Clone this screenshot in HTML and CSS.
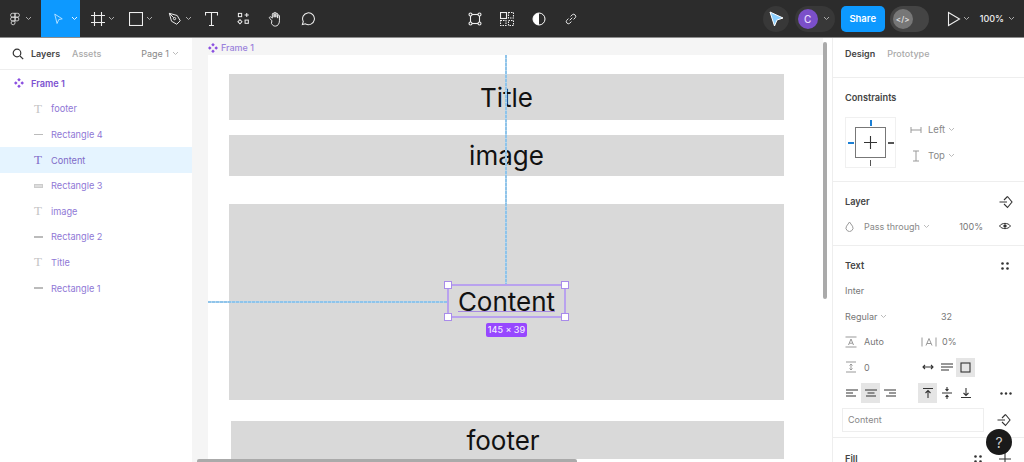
FILE: index.html
```html
<!DOCTYPE html>
<html lang="en">
<head>
<meta charset="utf-8">
<title>Figma</title>
<link rel="stylesheet" href="styles.css">
</head>
<body>
<header class="topbar">
  <div class="tools">
    <div class="tool tool-logo">
      <svg class="ic" width="10" height="14" viewBox="0 0 14 18"><path d="M7 1H3.500a2.700 2.700 0 0 0 0 5.400H7zM7 1h3.500a2.700 2.700 0 0 1 0 5.400H7zM7 6.400H3.500a2.700 2.700 0 0 0 0 5.400H7zM12.400 9.100a2.700 2.700 0 1 1-5.400 0 2.700 2.700 0 0 1 5.400 0zM7 11.800H3.500a2.700 2.700 0 1 0 3.500 2.600z"/></svg>
      <svg class="chev" width="7" height="5" viewBox="0 0 7 5"><path d="M1 1l2.500 2.500L6 1"/></svg>
    </div>
    <div class="tool tool-move">
      <svg class="ic ic-blue" width="11" height="12" viewBox="0 0 14 16"><path d="M2 1.500l10 6.300-4.600.9-2.300 5.300z"/></svg>
      <svg class="chev chev-white" width="7" height="5" viewBox="0 0 7 5"><path d="M1 1l2.500 2.500L6 1"/></svg>
    </div>
    <div class="tool tool-shape">
      <svg class="ic" width="14" height="14" viewBox="0 0 14 14"><path d="M3.500 0v14M10.500 0v14M0 3.500h14M0 10.500h14"/></svg>
      <svg class="chev" width="7" height="5" viewBox="0 0 7 5"><path d="M1 1l2.500 2.500L6 1"/></svg>
    </div>
    <div class="tool tool-shape">
      <svg class="ic" width="14" height="14" viewBox="0 0 14 14"><rect x="0.500" y="0.500" width="13" height="13"/></svg>
      <svg class="chev" width="7" height="5" viewBox="0 0 7 5"><path d="M1 1l2.500 2.500L6 1"/></svg>
    </div>
    <div class="tool tool-shape">
      <svg class="ic" width="14" height="14" viewBox="0 0 16 16"><path d="M1.500 1.500l9 2.500 3.500 6-4 4-6-3.500zM1.500 1.500l5 5"/><circle cx="7.500" cy="7.500" r="1.300"/></svg>
      <svg class="chev" width="7" height="5" viewBox="0 0 7 5"><path d="M1 1l2.500 2.500L6 1"/></svg>
    </div>
    <div class="tool tool-single">
      <svg class="ic" width="13" height="14" viewBox="0 0 13 14"><path d="M.5 3.500V.5h12v3M6.500.5v13M4 13.500h5"/></svg>
    </div>
    <div class="tool tool-single">
      <svg class="ic" width="13" height="13" viewBox="0 0 14 14"><rect x="1.500" y="1.500" width="3.500" height="3.500"/><path d="M10.500 1v4.500M8.200 3.200h4.500"/><path d="M3.200 8.300l2.100 2.200-2.100 2.200L1 10.500z"/><rect x="8.700" y="8.700" width="3.500" height="3.500"/></svg>
    </div>
    <div class="tool tool-single">
      <svg class="ic" width="16" height="16" viewBox="0 0 18 18"><path d="M5.500 11L3 8.200c-1-1.200.6-2.400 1.700-1.300L6 8V3.500c0-1.400 2-1.400 2 0V7 2.500c0-1.400 2-1.400 2 0V7 3.500c0-1.400 2-1.400 2 0V8 5.500c0-1.300 2-1.300 2 0V11c0 3.500-2 6-4.500 6-2 0-3.200-.8-4.500-3z"/></svg>
    </div>
    <div class="tool tool-single">
      <svg class="ic" width="15" height="15" viewBox="0 0 16 16"><path d="M2.500 14.500l1-3.300a6.300 6.300 0 1 1 2.400 2.500z"/></svg>
    </div>
  </div>
  <div class="actions">
    <div class="tool tool-single">
      <svg class="ic" width="14" height="14" viewBox="0 0 14 14"><rect x="2.500" y="2.500" width="9" height="9"/><circle cx="2.500" cy="2.500" r="1.500" class="knob"/><circle cx="11.500" cy="2.500" r="1.500" class="knob"/><circle cx="2.500" cy="11.500" r="1.500" class="knob"/><circle cx="11.500" cy="11.500" r="1.500" class="knob"/></svg>
    </div>
    <div class="tool tool-single">
      <svg class="ic" width="14" height="14" viewBox="0 0 14 14"><rect x="0.500" y="0.500" width="6" height="6"/><path class="dash" d="M8.500.5h5v5.500h-5zM.5 8.500h5.500v5H.5zM8.500 8.500h5v5h-5z"/></svg>
    </div>
    <div class="tool tool-single">
      <svg width="14" height="14" viewBox="0 0 14 14"><circle cx="7" cy="7" r="6" class="half-ring"/><path class="half-fill" d="M7 1a6 6 0 0 0 0 12z"/></svg>
    </div>
    <div class="tool tool-single">
      <svg class="ic" width="12" height="12" viewBox="0 0 14 14"><path d="M5.500 8.500l3-3M6.500 4L8.500 2a2.500 2.500 0 0 1 3.500 3.500L10 7.500M7.500 10L5.500 12A2.500 2.500 0 0 1 2 8.500L4 6.500"/></svg>
    </div>
  </div>
  <div class="session">
    <div class="pill-round">
      <svg width="16" height="16" viewBox="0 0 16 16"><path class="cursor" d="M2 1l13 6-6 2-2.500 6z"/></svg>
    </div>
    <div class="user">
      <span class="avatar">C</span>
      <svg class="chev" width="7" height="5" viewBox="0 0 7 5"><path d="M1 1l2.500 2.500L6 1"/></svg>
    </div>
    <button class="share">Share</button>
    <div class="devmode"><span class="devknob">&lt;/&gt;</span></div>
    <svg class="ic play" width="14" height="16" viewBox="0 0 14 16"><path d="M1.500 1.500l11 6.500-11 6.500z"/></svg>
    <svg class="chev" width="7" height="5" viewBox="0 0 7 5"><path d="M1 1l2.500 2.500L6 1"/></svg>
    <span class="zoom">100%</span>
    <svg class="chev" width="7" height="5" viewBox="0 0 7 5"><path d="M1 1l2.500 2.500L6 1"/></svg>
  </div>
</header>

<main class="workspace">
  <aside class="layers">
    <div class="tabs-left">
      <svg class="search" width="12" height="12" viewBox="0 0 12 12"><circle cx="5" cy="5" r="3.800"/><path d="M8 8l3.200 3.200"/></svg>
      <span class="tab-on">Layers</span>
      <span class="tab-off">Assets</span>
      <span class="page">Page 1</span>
      <svg class="chev chev-gray" width="7" height="5" viewBox="0 0 7 5"><path d="M1 1l2.500 2.500L6 1"/></svg>
    </div>
    <ul class="tree">
      <li class="row row-frame">
        <svg class="frame-ic" width="10" height="10" viewBox="0 0 10 10"><path d="M5 0l1.800 1.800L5 3.600 3.200 1.800zM5 6.400l1.800 1.800L5 10 3.200 8.200zM1.800 3.200L3.600 5 1.800 6.800 0 5zM8.200 3.200L10 5 8.200 6.800 6.400 5z"/></svg>
        Frame 1
      </li>
      <li class="row"><span class="t-ic">T</span>footer</li>
      <li class="row"><span class="r-ic"></span>Rectangle 4</li>
      <li class="row row-on"><span class="t-ic t-on">T</span>Content</li>
      <li class="row"><span class="r-ic r-tall"></span>Rectangle 3</li>
      <li class="row"><span class="t-ic">T</span>image</li>
      <li class="row"><span class="r-ic"></span>Rectangle 2</li>
      <li class="row"><span class="t-ic">T</span>Title</li>
      <li class="row"><span class="r-ic"></span>Rectangle 1</li>
    </ul>
  </aside>

  <section class="canvas">
    <div class="frame-label">
      <svg class="frame-ic" width="10" height="10" viewBox="0 0 10 10"><path d="M5 0l1.800 1.800L5 3.600 3.200 1.800zM5 6.400l1.800 1.800L5 10 3.200 8.200zM1.800 3.200L3.600 5 1.800 6.800 0 5zM8.200 3.200L10 5 8.200 6.800 6.400 5z"/></svg>
      Frame 1
    </div>
    <div class="frame"></div>
    <div class="block b-title">Title</div>
    <div class="block b-image">image</div>
    <div class="block b-content"></div>
    <div class="block b-footer">footer</div>
    <div class="guide-v"></div>
    <div class="guide-h"></div>
    <div class="selection">
      Content
      <i class="h tl"></i><i class="h tr"></i><i class="h bl"></i><i class="h br"></i>
      <span class="size">145 × 39</span>
    </div>
    <div class="scroll-v"></div>
    <div class="scroll-h"></div>
  </section>

  <aside class="props">
    <div class="tabs-right">
      <span class="tab-on">Design</span>
      <span class="tab-off">Prototype</span>
    </div>
    <section class="sec sec-constraints">
      <h3 class="sec-title">Constraints</h3>
      <div class="constraints">
        <div class="cbox">
          <div class="cinner"><svg class="ico-dark" width="13" height="13" viewBox="0 0 13 13"><path d="M6.500 0v13M0 6.500h13"/></svg></div>
          <i class="cb cb-top"></i><i class="cb cb-left"></i><i class="cb cb-right"></i><i class="cb cb-bottom"></i>
        </div>
        <div class="copts">
          <div class="copt">
            <svg class="ico" width="12" height="8" viewBox="0 0 12 8"><path d="M1 1v6M11 1v6M1 4h10"/></svg>
            <span>Left</span>
            <svg class="chev chev-gray" width="7" height="5" viewBox="0 0 7 5"><path d="M1 1l2.500 2.500L6 1"/></svg>
          </div>
          <div class="copt">
            <svg class="ico" width="12" height="12" viewBox="0 0 12 12"><path d="M3 1h6M3 11h6M6 1v10"/></svg>
            <span>Top</span>
            <svg class="chev chev-gray" width="7" height="5" viewBox="0 0 7 5"><path d="M1 1l2.500 2.500L6 1"/></svg>
          </div>
        </div>
      </div>
    </section>
    <section class="sec sec-layer">
      <div class="sec-head">
        <h3 class="sec-title">Layer</h3>
        <svg class="ico-dark" width="14" height="14" viewBox="0 0 14 14"><path d="M8.500 1.500L13 7l-4.500 5.500L5 9M5 5l3.500-3.500M0.500 7H8"/></svg>
      </div>
      <div class="layer-row">
        <svg class="ico" width="9" height="11" viewBox="0 0 9 11"><path d="M4.500 1l3 4.200a3.500 3.500 0 1 1-6 0z"/></svg>
        <span class="blend">Pass through</span>
        <svg class="chev chev-gray" width="7" height="5" viewBox="0 0 7 5"><path d="M1 1l2.500 2.500L6 1"/></svg>
        <span class="opacity">100%</span>
        <svg class="ico-dark eye" width="12" height="8" viewBox="0 0 12 8"><path d="M.5 4C3 .5 9 .5 11.500 4 9 7.500 3 7.500.500 4z"/><circle class="eye-dot" cx="6" cy="4" r="1.700"/></svg>
      </div>
    </section>
    <section class="sec sec-text">
      <div class="sec-head">
        <h3 class="sec-title">Text</h3>
        <svg class="dots" width="8" height="8" viewBox="0 0 8 8"><circle cx="1.500" cy="1.500" r="1.300"/><circle cx="6.500" cy="1.500" r="1.300"/><circle cx="1.500" cy="6.500" r="1.300"/><circle cx="6.500" cy="6.500" r="1.300"/></svg>
      </div>
      <div class="trow"><span class="val">Inter</span></div>
      <div class="trow">
        <div class="col-a"><span class="val">Regular</span><svg class="chev chev-gray" width="7" height="5" viewBox="0 0 7 5"><path d="M1 1l2.500 2.500L6 1"/></svg></div>
        <div class="col-b"><span class="val val-size">32</span></div>
      </div>
      <div class="trow">
        <div class="col-a"><svg class="ico lead" width="12" height="12" viewBox="0 0 12 12"><path d="M0.500 1h11M0.500 11h11M3.500 9L6 3l2.500 6M4.300 7.200h3.400"/></svg><span class="val">Auto</span></div>
        <div class="col-b"><svg class="ico pct" width="16" height="10" viewBox="0 0 16 10"><path d="M1 0.500v9M15 0.500v9M5 8.500L8 1.500l3 7M6 6.500h4"/></svg><span class="val">0%</span></div>
      </div>
      <div class="trow">
        <div class="col-a"><svg class="ico lead" width="12" height="12" viewBox="0 0 12 12"><path d="M1 1h10M1 11h10M6 3v6M4.500 4.500L6 3l1.500 1.500M4.500 7.500L6 9l1.500-1.500"/></svg><span class="val">0</span></div>
        <div class="col-b icons">
          <span class="ib"><svg class="ico-dark" width="12" height="8" viewBox="0 0 12 8"><path d="M1 4h10M3 2L1 4l2 2M9 2l2 2-2 2"/></svg></span>
          <span class="ib"><svg class="ico-dark" width="12" height="8" viewBox="0 0 12 8"><path d="M0 1h12M0 4h12M0 7h8"/></svg></span>
          <span class="ib ib-on"><svg class="ico-dark" width="11" height="11" viewBox="0 0 11 11"><rect x="1" y="1" width="9" height="9"/></svg></span>
        </div>
      </div>
      <div class="trow">
        <div class="col-a icons">
          <span class="ib"><svg class="ico-dark" width="12" height="8" viewBox="0 0 12 8"><path d="M0 1h12M0 4h7M0 7h10"/></svg></span>
          <span class="ib ib-on ib-tall"><svg class="ico-dark" width="12" height="8" viewBox="0 0 12 8"><path d="M0 1h12M2.500 4h7M1 7h10"/></svg></span>
          <span class="ib"><svg class="ico-dark" width="12" height="8" viewBox="0 0 12 8"><path d="M0 1h12M5 4h7M2 7h10"/></svg></span>
        </div>
        <div class="col-b icons">
          <span class="ib ib-on ib-tall"><svg class="ico-dark" width="10" height="10" viewBox="0 0 10 10"><path d="M0 .5h10M5 10V3M2.500 5L5 2.500 7.500 5"/></svg></span>
          <span class="ib"><svg class="ico-dark" width="10" height="12" viewBox="0 0 10 12"><path d="M0 6h10M5 0v3.500M3.500 2.200L5 3.700l1.500-1.500M5 12V8.500M3.500 9.800L5 8.300l1.500 1.500"/></svg></span>
          <span class="ib"><svg class="ico-dark" width="10" height="10" viewBox="0 0 10 10"><path d="M0 9.500h10M5 0v7M2.500 5L5 7.500 7.500 5"/></svg></span>
        </div>
        <svg class="more" width="12" height="3" viewBox="0 0 12 3"><circle cx="1.500" cy="1.500" r="1.200"/><circle cx="6" cy="1.500" r="1.200"/><circle cx="10.500" cy="1.500" r="1.200"/></svg>
      </div>
      <div class="input-row">
        <div class="input">Content</div>
        <svg class="ico-dark" width="14" height="14" viewBox="0 0 14 14"><path d="M8.500 1.500L13 7l-4.500 5.500L5 9M5 5l3.500-3.500M0.500 7H8"/></svg>
      </div>
    </section>
    <section class="sec-fill">
      <h3 class="sec-title">Fill</h3>
      <svg class="dots" width="8" height="8" viewBox="0 0 8 8"><circle cx="1.500" cy="1.500" r="1.300"/><circle cx="6.500" cy="1.500" r="1.300"/><circle cx="1.500" cy="6.500" r="1.300"/><circle cx="6.500" cy="6.500" r="1.300"/></svg>
      <svg class="ico-dark" width="12" height="12" viewBox="0 0 12 12"><path d="M6 0v12M0 6h12"/></svg>
    </section>
    <button class="help">?</button>
  </aside>
</main>
</body>
</html>
```

FILE: styles.css
```css
* { box-sizing: border-box; }
html, body { margin: 0; height: 100%; overflow: hidden; }
body { font-family: Inter, "Liberation Sans", sans-serif; font-size: 9px; color: #333; background: #fff; }
ul { list-style: none; margin: 0; padding: 0; }
h3 { margin: 0; }
svg { display: block; flex: none; fill: none; }

/* top bar */
.topbar { height: 38px; background: #2c2c2c; display: flex; align-items: stretch; border-bottom: 1px solid #8d8d8d; color: #fff; }
.tools { display: flex; width: 468px; }
.actions { display: flex; margin-left: -9px; }
.session { display: flex; align-items: center; margin-left: auto; }
.tool { display: flex; align-items: center; flex: none; }
.ic path, .ic rect, .ic circle { stroke: #eee; stroke-width: 1.100; fill: none; }
.ic-blue path { stroke: #cfeaff; }
.chev path { stroke: #aaa; stroke-width: 1; fill: none; }
.chev-white path { stroke: #e8f4ff; }
.chev-gray path { stroke: #bbb; }
.tool-logo { width: 41px; padding-left: 10px; gap: 5px; }
.tool-move { width: 39px; background: #0d99ff; padding-left: 11.500px; gap: 7px; }
.tool-shape { width: 38.500px; padding-left: 10.500px; gap: 3px; }
.tool-single { width: 32px; justify-content: center; }
.tool-shape + .tool-single { margin-left: -.500px; }
.ic .dash { stroke-dasharray: 1.500 1; }
.ic .knob { fill: #2c2c2c; }
.half-ring { fill: #2c2c2c; stroke: #fff; stroke-width: 1; }
.half-fill { fill: #fff; }
.pill-round { width: 26px; height: 26px; border-radius: 50%; background: #383838; display: flex; align-items: center; justify-content: center; margin-right: 6px; }
.cursor { fill: #8ccfff; stroke: #fff; stroke-width: 1; }
.user { width: 40px; height: 26px; border-radius: 13px; background: #383838; display: flex; align-items: center; padding-left: 3px; gap: 5px; margin-right: 6px; }
.avatar { width: 20px; height: 20px; border-radius: 50%; background: #7b4fc9; color: #e8dcff; font-size: 10px; font-weight: 500; display: flex; align-items: center; justify-content: center; }
.share { width: 44px; height: 26px; border: 0; border-radius: 5px; background: #0d99ff; color: #fff; font: 600 9.500px Inter, "Liberation Sans", sans-serif; padding: 0; margin-right: 5px; }
.devmode { width: 39px; height: 26px; border-radius: 13px; background: #444; padding: 3px; margin-right: 18px; }
.devknob { display: flex; width: 20px; height: 20px; border-radius: 50%; background: #777; align-items: center; justify-content: center; color: #ddd; font-size: 8px; font-weight: 600; }
.play { margin-right: 2.500px; }
.session > .chev { margin-right: 9.500px; }
.session > .chev:last-child { margin-left: 3.500px; margin-right: 9.500px; }
.zoom { font-size: 9px; font-weight: 500; color: #eee; }

/* workspace */
.workspace { display: flex; height: 424px; }
.layers { width: 192px; flex: none; background: #fff; }
.tabs-left { height: 32px; display: flex; align-items: center; padding-left: 12px; border-bottom: 1px solid #eee; }
.search { margin-right: 7px; }
.search circle, .search path { stroke: #333; stroke-width: 1.200; fill: none; }
.tab-on { font-weight: 600; font-size: 9px; color: #444; }
.tab-off { font-size: 9px; color: #aaa; font-weight: 500; }
.tabs-left .tab-off { margin-left: 12px; }
.page { font-size: 9px; color: #888; margin-left: auto; margin-right: 3px; }
.tabs-left .chev { margin-right: 13px; }
.tree { padding-top: .500px; }
.row { height: 25.600px; display: flex; align-items: center; padding-left: 51px; font-size: 9.200px; color: #8f78d6; position: relative; }
.row-on { background: #e5f4ff; color: #7f6bc8; }
.row-frame { padding-left: 14px; gap: 7px; font-weight: 600; color: #7d52d0; }
.frame-ic { fill: #8a4fe0; }
.t-ic { width: 18px; margin-left: -22px; margin-right: 4px; text-align: center; font: 13px "Liberation Serif", serif; color: #c4c4c4; }
.t-on { color: #7f6bc8; }
.r-ic { width: 9px; height: 1.500px; background: #bbb; margin: 0 8px 0 -17px; }
.r-tall { height: 4px; background: #ddd; border: 1px solid #ccc; }

/* canvas */
.canvas { width: 640px; flex: none; position: relative; background: #fff; overflow: hidden; }
.canvas::before { content: ""; position: absolute; left: 0; top: 0; width: 631px; height: 100%; background: #f5f5f5; }
.frame { position: absolute; left: 16px; top: 17px; width: 624px; height: 407px; background: #fff; }
.frame-label { position: absolute; left: 16px; top: 4px; display: flex; align-items: center; gap: 3px; color: #9b82dc; font-size: 9px; font-weight: 500; line-height: 12px; }
.block { position: absolute; background: #d9d9d9; display: flex; align-items: center; justify-content: center; color: #111; font-size: 26px; }
.b-title { left: 37px; top: 36px; width: 555px; height: 46px; }
.b-image { left: 37px; top: 97px; width: 555px; height: 41px; }
.b-content { left: 37px; top: 166px; width: 555px; height: 196px; }
.b-footer { left: 39px; top: 383px; width: 553px; height: 38px; padding-right: 9px; }
.guide-v { position: absolute; left: 313px; top: 17px; width: 2px; height: 230px; background: repeating-linear-gradient(to bottom, #8fc4ea 0 3px, #b5d6ee 3px 4px); }
.guide-h { position: absolute; left: 16px; top: 263px; width: 240px; height: 2px; background: repeating-linear-gradient(to right, #8fc4ea 0 3px, #b5d6ee 3px 4px); }
.selection { position: absolute; left: 255px; top: 246px; width: 119px; height: 34px; border: 2px solid #b9a2ee; display: flex; align-items: center; justify-content: center; color: #111; font-size: 26px; white-space: nowrap; }
.selection::after { content: ""; position: absolute; left: 9px; right: 9px; bottom: 4px; height: 1px; background: #a688e0; }
.h { position: absolute; width: 8px; height: 8px; background: #fff; border: 1px solid #a98bea; }
.tl { left: -5px; top: -5px; }
.tr { right: -5px; top: -5px; }
.bl { left: -5px; bottom: -5px; }
.br { right: -5px; bottom: -5px; }
.size { position: absolute; left: 37px; top: 37px; width: 41px; height: 14px; border-radius: 2px; background: #9747ff; color: #f0e6ff; font-size: 9px; font-weight: 500; line-height: 14px; text-align: center; }
.scroll-v { position: absolute; left: 631px; top: 4px; width: 4px; height: 257px; background: #aaa; border-radius: 2px; }
.scroll-h { position: absolute; left: 5px; bottom: 0; width: 380px; height: 3px; background: #aaa; border-radius: 2px 2px 0 0; }

/* properties */
.props { width: 192px; flex: none; position: relative; border-left: 1px solid #eee; background: #fff; }
.tabs-right { height: 40px; padding: 9px 0 0 12px; display: flex; gap: 12px; border-bottom: 1px solid #eee; line-height: 13px; align-items: flex-start; }
.sec { padding: 0 0 0 12px; border-bottom: 1px solid #eee; }
.sec-title { font-size: 9.200px; font-weight: 600; color: #444; line-height: 13px; }
.sec-constraints { height: 104px; padding-top: 13px; }
.constraints { display: flex; margin-top: 13px; }
.cbox { width: 51px; height: 51px; border: 1px solid #f0f0f0; position: relative; flex: none; }
.cinner { position: absolute; left: 9px; top: 9px; width: 31px; height: 31px; border: 1px solid #777; display: flex; align-items: center; justify-content: center; }
.cb { position: absolute; background: #555; }
.cb-top { left: 24px; top: 2px; width: 2px; height: 6px; background: #1b7fd4; }
.cb-left { left: 2px; top: 24px; width: 6px; height: 2px; background: #1b7fd4; }
.cb-right { left: 42px; top: 24px; width: 6px; height: 1.500px; }
.cb-bottom { left: 24px; top: 42px; width: 1px; height: 6px; }
.copts { display: flex; flex-direction: column; gap: 13px; padding: 6px 0 0 14px; }
.copt { display: flex; align-items: center; height: 13px; color: #888; font-size: 9.500px; }
.copt span { margin-left: 6px; margin-right: 3px; }
.ico path, .ico rect { stroke: #999; stroke-width: 1; fill: none; }
.ico-dark path, .ico-dark rect { stroke: #333; stroke-width: 1.100; fill: none; }
.sec-layer { height: 64px; }
.sec-head { display: flex; justify-content: space-between; align-items: center; padding: 13px 12px 0 0; height: 26px; }
.sec-layer .sec-head .ico-dark { margin-right: -1px; }
.layer-row { display: flex; align-items: center; height: 14px; margin-top: 11px; color: #888; font-size: 9px; padding-right: 13px; }
.blend { margin: 0 3px 0 10px; }
.opacity { margin-left: auto; margin-right: 16px; color: #777; }
.eye path { stroke-width: 1; }
.eye-dot { fill: #333; }
.sec-text { height: 192px; }
.dots { fill: #333; }
.sec-text .dots { margin-right: 3px; }
.trow { display: flex; align-items: center; height: 25.500px; color: #888; font-size: 9px; position: relative; }
.sec-text .sec-head + .trow { margin-top: 6px; }
.val { color: #777; }
.col-a { width: 76px; display: flex; align-items: center; gap: 6px; }
.col-a > .val + .chev { margin-left: -3px; }
.col-b { display: flex; align-items: center; gap: 5px; }
.val-size { margin-left: 20px; }
.lead { margin-right: 1px; }
.icons { gap: 0; }
.col-a.icons { margin-left: -3px; width: 79px; }
.col-b.icons { margin-left: -3px; }
.ib { width: 19px; height: 19px; display: flex; align-items: center; justify-content: center; }
.ib-on { background: #e5e5e5; }
.ib-tall { height: 20px; }
.more { fill: #333; position: absolute; right: 12px; top: 12px; }
.input-row { display: flex; align-items: center; gap: 13px; margin: 2.500px 0 0 -3px; }
.input { width: 142px; height: 24px; border: 1px solid #eee; padding-left: 5px; line-height: 22px; color: #888; font-size: 9px; }
.sec-fill { display: flex; align-items: center; padding: 14px 13px 0 12px; }
.sec-fill .dots { margin-left: auto; margin-right: 17px; }
.help { position: absolute; right: 12px; bottom: 7px; width: 26px; height: 26px; border-radius: 50%; border: 0; padding: 0; background: #1a1a1a; color: #ccc; font: 14px Inter, "Liberation Sans", sans-serif; }
```
